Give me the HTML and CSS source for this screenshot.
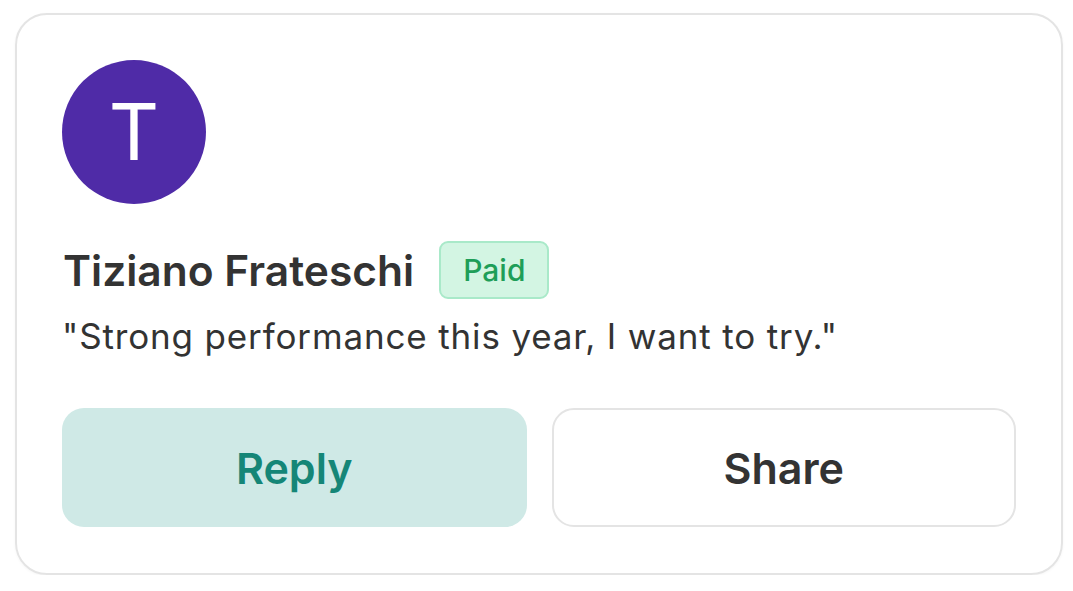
FILE: index.html
```html
<!DOCTYPE html>
<html>
<head>
<meta charset="utf-8">
<link rel="stylesheet" href="styles.css">
</head>
<body>
<div class="card">
  <div class="avatar">T</div>
  <div class="name-row">
    <span class="name">Tiziano Frateschi</span>
    <span class="badge">Paid</span>
  </div>
  <p class="quote">"Strong performance this year, I want to try."</p>
  <div class="actions">
    <button class="btn btn-reply">Reply</button>
    <button class="btn btn-share">Share</button>
  </div>
</div>
</body>
</html>
```
FILE: styles.css
```css
html, body {
  margin: 0;
  padding: 0;
  background: #ffffff;
}
body {
  font-family: Inter, "Noto Sans", "Liberation Sans", sans-serif;
  color: #333333;
}
.card {
  box-sizing: border-box;
  width: 1048px;
  height: 562px;
  margin: 13px 0 0 15px;
  border: 2px solid #e4e4e4;
  border-radius: 32px;
  padding: 45px 45px 0 45px;
  box-shadow: 0 1px 3px rgba(0,0,0,0.04);
}
.avatar {
  width: 144px;
  height: 144px;
  border-radius: 50%;
  background: #4f2ba7;
  color: #ffffff;
  display: flex;
  align-items: center;
  justify-content: center;
  font-size: 78px;
  font-weight: 400;
  line-height: 1;
}
.name-row {
  display: flex;
  align-items: center;
  gap: 25px;
  margin-top: 37px;
  height: 58px;
}
.name {
  font-size: 42.5px;
  font-weight: 600;
  color: #333333;
  letter-spacing: 0;
  margin-left: 1px;
}
.badge {
  box-sizing: border-box;
  height: 58px;
  padding: 0 22px;
  display: flex;
  align-items: center;
  background: #d3f5e3;
  border: 2px solid #a9e9c9;
  border-radius: 9px;
  color: #1e9e58;
  font-size: 30px;
  font-weight: 500;
}
.quote {
  margin: 15px 0 0 0;
  font-size: 35px;
  line-height: 44px;
  letter-spacing: 0.85px;
  color: #333333;
}
.actions {
  display: flex;
  gap: 25px;
  margin-top: 50px;
}
.btn {
  box-sizing: border-box;
  width: 465px;
  height: 119px;
  border-radius: 22px;
  font-family: Inter, "Noto Sans", "Liberation Sans", sans-serif;
  font-size: 43px;
  font-weight: 600;
  cursor: pointer;
}
.btn-reply {
  background: #cfe9e6;
  border: none;
  color: #158677;
}
.btn-share {
  background: #ffffff;
  border: 2px solid #e4e4e4;
  color: #333333;
}
```
